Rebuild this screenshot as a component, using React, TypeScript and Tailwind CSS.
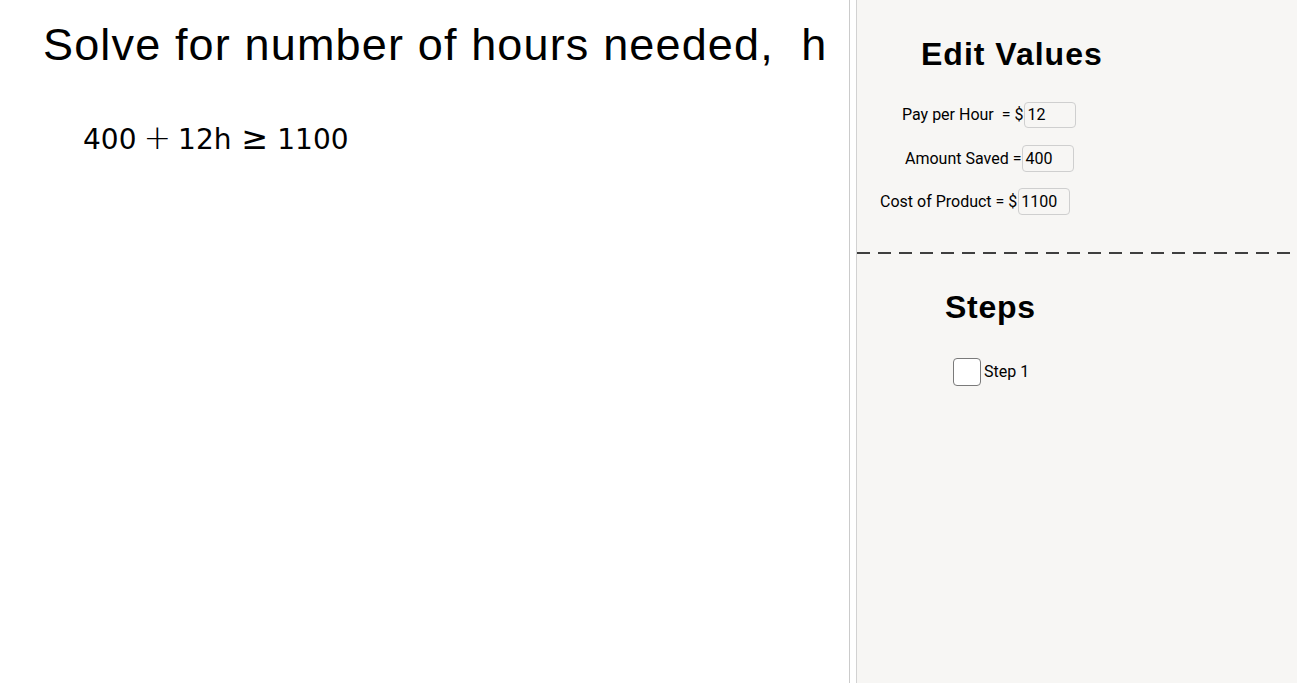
import React from "react";

const sans = { fontFamily: '"Liberation Sans", Arial, sans-serif' };

function Field({ label, value, ml, h }: { label: string; value: string; ml: string; h: string }) {
  return (
    <div className={`flex items-center ${h} ${ml}`}>
      <span className="whitespace-pre text-[16px] text-black font-['Roboto',sans-serif]">{label}</span>
      <div className={`ml-[1px] w-[52px] ${h} rounded-[4px] border border-[#cfcfcf] flex items-center pl-[2px] text-[16px] text-black font-['Roboto',sans-serif]`}>
        {value}
      </div>
    </div>
  );
}

export default function App() {
  return (
    <div className="w-[1297px] h-[685px] bg-white flex overflow-hidden">
      <div className="w-[849px] h-[683px] shrink-0 flex flex-col">
        <div
          className="mt-[22px] ml-[43px] text-[45px] leading-none tracking-[1.15px] text-black whitespace-pre"
          style={sans}
        >
          Solve for number of hours needed,  h
        </div>
        <div className="mt-[54px] ml-[83px] flex items-baseline text-[28px] leading-none text-black font-['DejaVu_Sans',sans-serif]">
          <span>400</span>
          <span className="ml-[7px] text-[33px] font-extralight">+</span>
          <span className="ml-[7px]">12h</span>
          <span className="ml-[10px] text-[32px]">≥</span>
          <span className="ml-[9px]">1100</span>
        </div>
      </div>
      <div className="w-px h-[683px] bg-[#cbcbcb] shrink-0" />
      <div className="w-[6px] h-[683px] bg-white shrink-0" />
      <div className="flex-1 h-[683px] bg-[#f7f6f4] border-l border-[#d2d2d2] flex flex-col">
        <div
          className="mt-[38px] ml-[64px] text-[32px] leading-none font-bold tracking-[1px] text-black"
          style={sans}
        >
          Edit Values
        </div>
        <div className="mt-[32px]">
          <Field label="Pay per Hour  = $" value="12" ml="ml-[45px]" h="h-[26px]" />
        </div>
        <div className="mt-[17px]">
          <Field label="Amount Saved =" value="400" ml="ml-[48px]" h="h-[27px]" />
        </div>
        <div className="mt-[16px]">
          <Field label="Cost of Product = $" value="1100" ml="ml-[23px]" h="h-[27px]" />
        </div>
        <div className="mt-[37px] h-[2px] w-full bg-[repeating-linear-gradient(to_right,#3f3f3f_0_13px,transparent_13px_21px)]" />
        <div
          className="mt-[37px] ml-[88px] text-[32px] leading-none font-bold tracking-[0.7px] text-black"
          style={sans}
        >
          Steps
        </div>
        <div className="mt-[35px] ml-[96px] flex items-center">
          <div className="w-[28px] h-[28px] rounded-[4px] border border-[#7a7a7a] bg-white" />
          <span className="ml-[3px] text-[16px] text-black font-['Roboto',sans-serif]">Step 1</span>
        </div>
      </div>
    </div>
  );
}
